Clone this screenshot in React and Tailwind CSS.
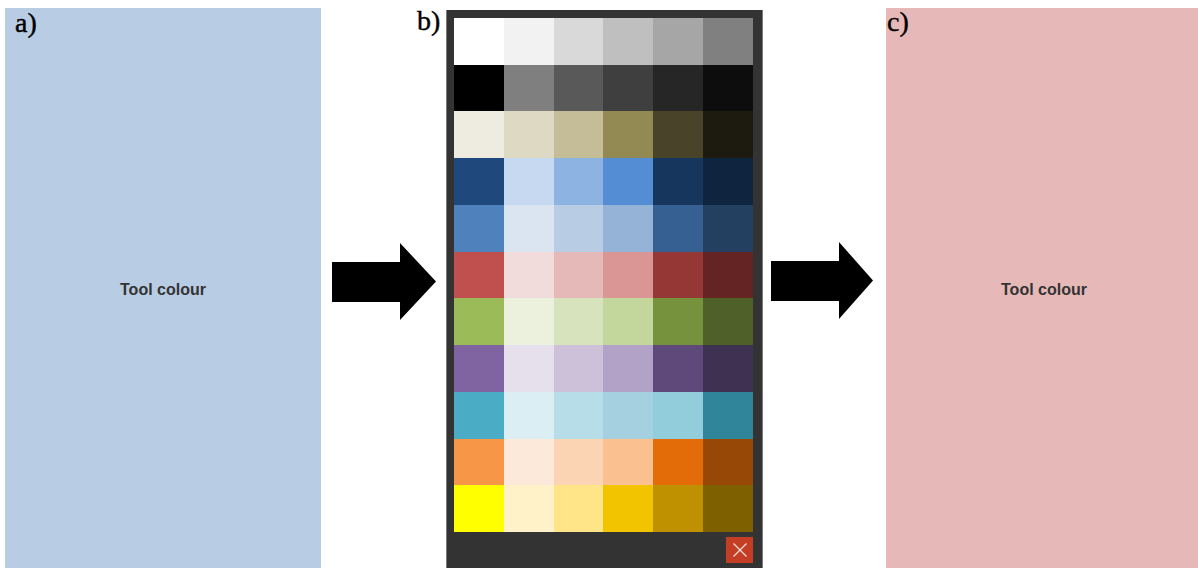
import React from "react";

const ROWS = [
  ["#ffffff", "#f2f2f2", "#d9d9d9", "#bfbfbf", "#a6a6a6", "#808080"],
  ["#000000", "#7f7f7f", "#595959", "#3f3f3f", "#262626", "#0d0d0d"],
  ["#eeece1", "#ddd9c3", "#c4bd97", "#938953", "#494429", "#1d1b10"],
  ["#1f497d", "#c6d9f0", "#8db3e2", "#548dd4", "#17365d", "#0f243e"],
  ["#4f81bd", "#dbe5f1", "#b8cce4", "#95b3d7", "#366092", "#244061"],
  ["#c0504d", "#f2dcdb", "#e5b9b7", "#d99694", "#953734", "#632423"],
  ["#9bbb59", "#ebf1dd", "#d7e3bc", "#c3d69b", "#76923c", "#4f6128"],
  ["#8064a2", "#e5e0ec", "#ccc1d9", "#b2a2c7", "#5f497a", "#3f3151"],
  ["#4bacc6", "#dbeef3", "#b7dde8", "#a5d0e0", "#92cddc", "#31859b"],
  ["#f79646", "#fde9d9", "#fbd4b4", "#fac08f", "#e36c09", "#974806"],
  ["#ffff00", "#fff2c9", "#ffe588", "#f2c400", "#bf9000", "#7f6000"],
];

function Arrow({ w }) {
  const head = 68;
  return (
    <svg width={w} height="77" viewBox={`0 0 ${w} 77`} className="block">
      <polygon
        points={`0,19 ${head},19 ${head},0 ${w},38.5 ${head},77 ${head},59 0,59`}
        fill="#000"
      />
    </svg>
  );
}

const labelCls =
  "absolute text-[28px] leading-none text-black [-webkit-text-stroke:0.4px_black] font-['Liberation_Serif','Times_New_Roman',serif]";

export default function App() {
  return (
    <div className="relative w-[1198px] h-[568px] bg-white overflow-hidden flex items-start">
      {/* Panel a */}
      <div className="ml-[5px] mt-[8px] w-[316px] h-[560px] bg-[#b8cce4] flex items-center justify-center pt-[4px]">
        <span className="text-[16px] font-bold text-[#333] font-['Liberation_Sans',Arial,sans-serif]">
          Tool colour
        </span>
      </div>

      {/* Arrow 1 */}
      <div className="ml-[11px] mt-[243px]">
        <Arrow w={104} />
      </div>

      {/* Palette */}
      <div className="ml-[10px] mt-[10px] w-[317px] h-[558px] bg-[#333333] border-x border-[#7a7a7a] pl-[7px] pr-[8px] pt-[8px] flex flex-col">
        <div className="w-[299px] h-[514px] grid grid-cols-6 grid-rows-11">
          {ROWS.flat().map((c, i) => (
            <div key={i} style={{ backgroundColor: c }} />
          ))}
        </div>
        <div className="mt-[5px] w-[299px] flex justify-end">
          <button className="w-[27px] h-[26px] bg-[#c43d25] flex items-center justify-center">
            <svg width="14" height="14" viewBox="0 0 14 14">
              <line x1="0.5" y1="0.5" x2="13.5" y2="13.5" stroke="#f6dcd6" strokeWidth="1.2" />
              <line x1="13.5" y1="0.5" x2="0.5" y2="13.5" stroke="#f6dcd6" strokeWidth="1.2" />
            </svg>
          </button>
        </div>
      </div>

      {/* Arrow 2 */}
      <div className="ml-[8px] mt-[242px]">
        <Arrow w={102} />
      </div>

      {/* Panel c */}
      <div className="ml-[13px] mt-[8px] flex-1 h-[560px] bg-[#e6b9b8] flex items-center justify-center pt-[4px] pl-[4px]">
        <span className="text-[16px] font-bold text-[#333] font-['Liberation_Sans',Arial,sans-serif]">
          Tool colour
        </span>
      </div>

      <span className={`${labelCls} left-[15px] top-[9px]`}>a)</span>
      <span className={`${labelCls} left-[417px] top-[7px]`}>b)</span>
      <span className={`${labelCls} left-[887px] top-[8px]`}>c)</span>
    </div>
  );
}
